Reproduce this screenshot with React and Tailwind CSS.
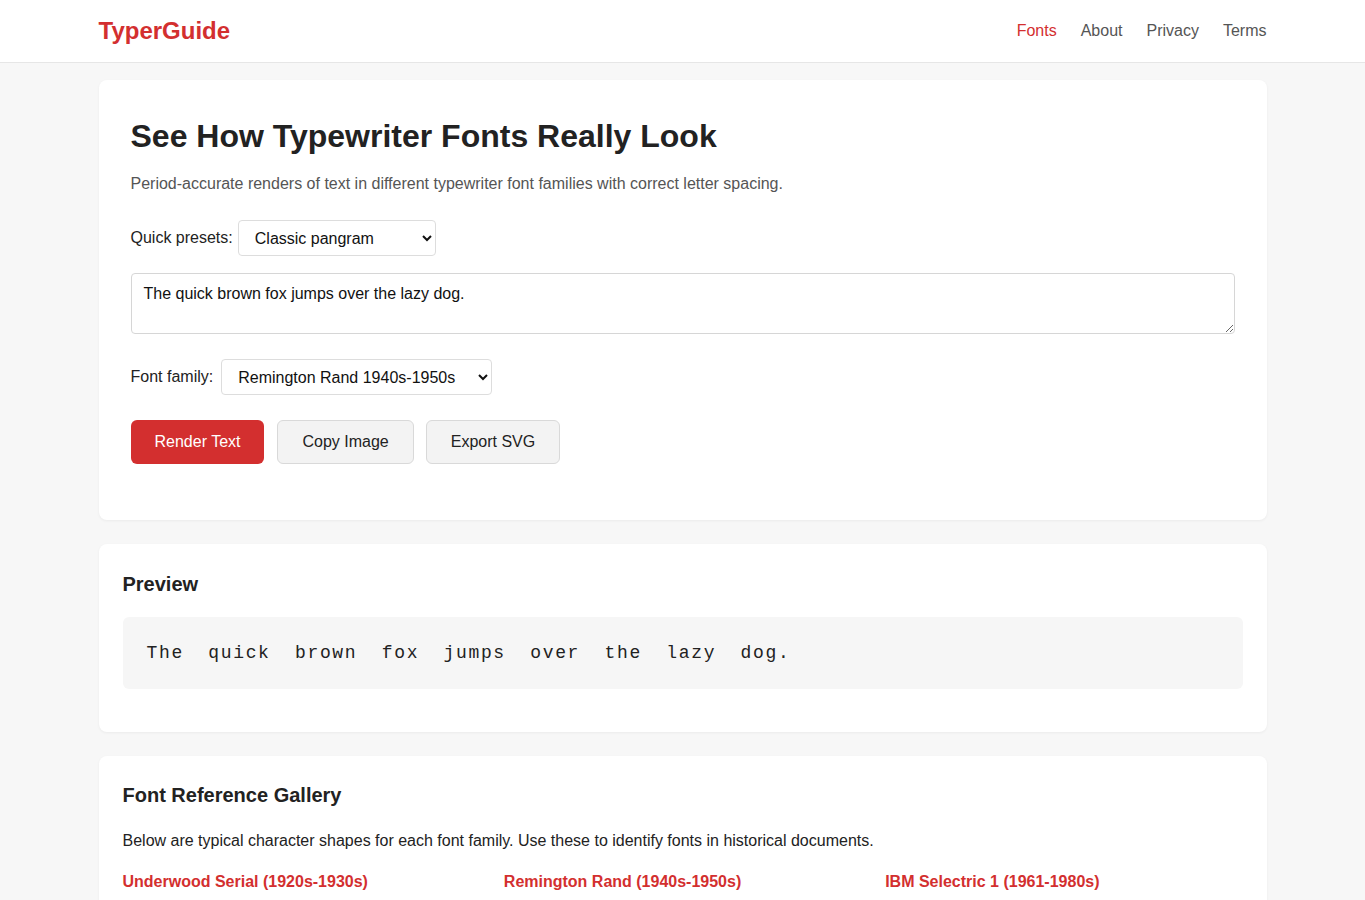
import React, { useState } from "react";

const fonts = [
  { name: "Underwood Serial (1920s-1930s)", sample: "ABCDEFGHIJKLM abcdefghijklm 0123456789" },
  { name: "Remington Rand (1940s-1950s)", sample: "ABCDEFGHIJKLM abcdefghijklm 0123456789" },
  { name: "IBM Selectric 1 (1961-1980s)", sample: "ABCDEFGHIJKLM abcdefghijklm 0123456789" },
];

const App = () => {
  const [text, setText] = useState("The quick brown fox jumps over the lazy dog.");

  return (
    <div className="min-h-screen bg-[#f7f7f7] font-['Liberation_Sans',Arial,sans-serif] text-[#222]">
      {/* header */}
      <header className="h-[63px] bg-white border-b border-[#e6e6e6]">
        <div className="max-w-[1200px] mx-auto px-4 h-full flex items-center justify-between">
          <a href="#" className="text-[24px] font-bold text-[#d32f2f]">
            TyperGuide
          </a>
          <nav className="flex items-center gap-6 text-[16px] text-[#555]">
            <a href="#" className="text-[#d32f2f]">Fonts</a>
            <a href="#">About</a>
            <a href="#">Privacy</a>
            <a href="#">Terms</a>
          </nav>
        </div>
      </header>

      <main className="max-w-[1200px] mx-auto px-4 pt-[17px] pb-10 flex flex-col gap-6">
        {/* tool card */}
        <section className="bg-white rounded-lg shadow-[0_1px_3px_rgba(0,0,0,0.05)] px-8 pt-8 pb-[56px]">
          <h1 className="text-[32px] leading-[48px] font-bold text-[#222]">
            See How Typewriter Fonts Really Look
          </h1>
          <p className="mt-3 text-[16px] leading-6 text-[#555]">
            Period-accurate renders of text in different typewriter font families with correct letter spacing.
          </p>

          <div className="mt-6 flex items-center gap-[5px] text-[16px]">
            <label>Quick presets:</label>
            <select className="w-[198px] h-9 px-3 border border-[#ddd] rounded bg-white text-[16px] text-[#111]">
              <option>Classic pangram</option>
              <option>Business letter</option>
              <option>Telegram</option>
            </select>
          </div>

          <textarea
            value={text}
            onChange={(e) => setText(e.target.value)}
            className="block mt-[17px] w-full h-[61px] px-3 py-[10px] border border-[#d6d6d6] rounded text-[16px] leading-[20px] text-[#111]"
          />

          <div className="mt-[25px] flex items-center gap-2 text-[16px]">
            <label>Font family:</label>
            <select className="w-[271px] h-9 px-3 border border-[#ddd] rounded bg-white text-[16px] text-[#111]">
              <option>Remington Rand 1940s-1950s</option>
              <option>Underwood Serial 1920s-1930s</option>
              <option>IBM Selectric 1 1961-1980s</option>
            </select>
          </div>

          <div className="mt-[25px] flex items-center gap-3">
            <button className="h-11 px-6 rounded-md bg-[#d32f2f] text-white text-[16px]">
              Render Text
            </button>
            <button className="h-11 px-6 ml-[1px] rounded-md bg-[#f3f3f3] border border-[#d9d9d9] text-[16px] text-[#222]">
              Copy Image
            </button>
            <button className="h-11 px-6 rounded-md bg-[#f3f3f3] border border-[#d9d9d9] text-[16px] text-[#222]">
              Export SVG
            </button>
          </div>
        </section>

        {/* preview */}
        <section className="bg-white rounded-lg shadow-[0_1px_3px_rgba(0,0,0,0.05)] px-6 pt-6 pb-[43px]">
          <h2 className="text-[20px] leading-[32px] font-bold">Preview</h2>
          <div className="mt-[17px] h-[72px] flex items-center px-6 bg-[#f6f6f6] rounded-md">
            <p className="font-['Liberation_Mono','Courier_New',monospace] text-[18px] tracking-[1.65px] [word-spacing:12px] text-[#222] whitespace-pre">
              {text}
            </p>
          </div>
        </section>

        {/* gallery */}
        <section className="bg-white rounded-lg shadow-[0_1px_3px_rgba(0,0,0,0.05)] px-6 pt-6 pb-8">
          <h2 className="text-[20px] leading-[30px] font-bold">Font Reference Gallery</h2>
          <p className="mt-[19px] text-[16px] leading-6">
            Below are typical character shapes for each font family. Use these to identify fonts in historical documents.
          </p>
          <div className="mt-[17px] grid grid-cols-3 gap-6">
            {fonts.map((f) => (
              <div key={f.name}>
                <h3 className="text-[16px] leading-6 font-bold text-[#d32f2f]">{f.name}</h3>
                <div className="mt-3 p-4 bg-[#f6f6f6] rounded-md font-['Liberation_Mono',monospace] text-[15px] tracking-[2px]">
                  {f.sample}
                </div>
              </div>
            ))}
          </div>
        </section>
      </main>
    </div>
  );
};

export default App;
